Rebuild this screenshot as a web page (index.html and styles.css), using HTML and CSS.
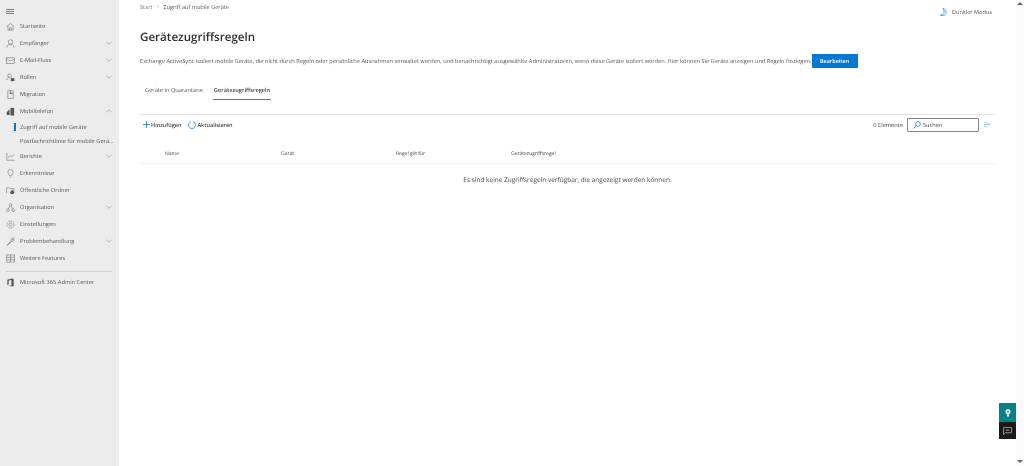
FILE: index.html
```html
<!DOCTYPE html>
<html lang="de">
<head>
<meta charset="utf-8">
<title>Gerätezugriffsregeln</title>
<link rel="stylesheet" href="styles.css">
</head>
<body>
<div class="app">
  <nav class="side">
    <div class="burger"><svg width="8" height="5" viewBox="0 0 8 5"><path d="M0 .5h8M0 2.500h8M0 4.500h8" stroke="#666" stroke-width=".8"/></svg></div>
    <a class="item"><svg class="ic" viewBox="0 0 10 10"><path d="M1 5 5 1.500 9 5M2.200 4.200V9h5.600V4.200M4 9V6.500h2V9"/></svg><span class="lb">Startseite</span></a>
    <a class="item"><svg class="ic" viewBox="0 0 10 10"><circle cx="5" cy="3.300" r="2.500"/><path d="M1 9.500C1 7 3 5.800 5 5.800S9 7 9 9.500"/></svg><span class="lb">Empfänger</span><svg class="chev" viewBox="0 0 7 4"><path d="M.5.5 3.500 3.500 6.500.5"/></svg></a>
    <a class="item"><svg class="ic" viewBox="0 0 10 10"><rect x=".5" y="2" width="9" height="6.500"/><path d="M.5 3.500 5 5.500 9.500 3.500"/></svg><span class="lb">E-Mail-Fluss</span><svg class="chev" viewBox="0 0 7 4"><path d="M.5.5 3.500 3.500 6.500.5"/></svg></a>
    <a class="item"><svg class="ic" viewBox="0 0 10 10"><circle cx="4" cy="3" r="2"/><path d="M.8 8C.8 6 2.200 5.200 4 5.200"/><rect class="fill" x="5.300" y="5.800" width="4" height="3.200"/></svg><span class="lb">Rollen</span><svg class="chev" viewBox="0 0 7 4"><path d="M.5.5 3.500 3.500 6.500.5"/></svg></a>
    <a class="item"><svg class="ic" viewBox="0 0 10 10"><path d="M2 .8h6v8.700H2zM5 .8v3h3"/><rect class="fill" x="4.200" y="3" width="2" height="1.500"/></svg><span class="lb">Migration</span></a>
    <a class="item"><svg class="ic" viewBox="0 0 10 10"><rect class="fill" x="5" y="1" width="4" height="8.500"/><path class="fill" d="M.8 5.500 4 2.800v6H.8z"/></svg><span class="lb">Mobiltelefon</span><svg class="chev" viewBox="0 0 7 4"><path d="M.5 3.500 3.500.5 6.500 3.500"/></svg></a>
    <a class="sub current"><span>Zugriff auf mobile Geräte</span></a>
    <a class="sub"><span>Postfachrichtlinie für mobile Gerä...</span></a>
    <a class="item"><svg class="ic" viewBox="0 0 10 10"><path d="M.8 1v8.200H9.500M2.500 6.500 4.500 4l2 1.500L9 2.500"/></svg><span class="lb">Berichte</span><svg class="chev" viewBox="0 0 7 4"><path d="M.5.5 3.500 3.500 6.500.5"/></svg></a>
    <a class="item"><svg class="ic" viewBox="0 0 10 10"><path d="M3.500 7C3.500 5.800 2 5.200 2 3.500a3 3 0 0 1 6 0C8 5.200 6.500 5.800 6.500 7zM4 9h2"/></svg><span class="lb">Erkenntnisse</span></a>
    <a class="item"><svg class="ic" viewBox="0 0 10 10"><path d="M.5 8V2h3l1 1H9v2"/><circle class="fill" cx="7" cy="7" r="2.200"/></svg><span class="lb">Öffentliche Ordner</span></a>
    <a class="item"><svg class="ic" viewBox="0 0 10 10"><circle cx="5" cy="2.200" r="1.500"/><circle cx="2" cy="8" r="1.500"/><circle cx="8" cy="8" r="1.500"/><path d="M4.300 3.500 2.700 6.700M5.700 3.500 7.300 6.700"/></svg><span class="lb">Organisation</span><svg class="chev" viewBox="0 0 7 4"><path d="M.5.5 3.500 3.500 6.500.5"/></svg></a>
    <a class="item"><svg class="ic" viewBox="0 0 10 10"><circle cx="5" cy="5" r="1.800"/><circle cx="5" cy="5" r="4" stroke-dasharray="1.500 .6"/></svg><span class="lb">Einstellungen</span></a>
    <a class="item"><svg class="ic" viewBox="0 0 10 10"><path d="M1 9 5.500 4.500C5 3 6 1 8.500 1L7 2.800 7.500 3.500 9.200 2.500C9 4.800 7.200 5.500 6 5L1.800 9.500z"/></svg><span class="lb">Problembehandlung</span><svg class="chev" viewBox="0 0 7 4"><path d="M.5.5 3.500 3.500 6.500.5"/></svg></a>
    <a class="item"><svg class="ic" viewBox="0 0 10 10"><path d="M.5 1h9v8h-9zM5 1v8M.5 3.700H9.500M.5 6.300H9.500"/></svg><span class="lb">Weitere Features</span></a>
    <div class="rule"></div>
    <a class="item"><svg class="ic" viewBox="0 0 10 10"><path class="fill" d="M1.500 2 6.500.5 8.500 1.200V8.800L6.500 9.500 1.500 8 6 8.500V2L3 3V7L1.500 8z"/></svg><span class="lb">Microsoft 365 Admin Center</span></a>
  </nav>

  <main class="main">
    <header class="top">
      <div class="crumbs"><span class="crumb-a">Start</span><span class="crumb-sep">&gt;</span><span>Zugriff auf mobile Geräte</span></div>
      <div class="dark"><svg class="moon" viewBox="0 0 10 10"><path d="M4.500.8C7 1.500 8.500 4 7.800 6.500 7.200 8.500 4.500 9.800 1.500 8.500 4 8.300 5.500 7 5.700 5.200 5.800 3.500 5.300 2 4.500.8z"/></svg><span>Dunkler Modus</span></div>
    </header>
    <h1>Gerätezugriffsregeln</h1>
    <div class="desc">
      <span>Exchange ActiveSync isoliert mobile Geräte, die nicht durch Regeln oder persönliche Ausnahmen verwaltet werden, und benachrichtigt ausgewählte Administratoren, wenn diese Geräte isoliert werden. Hier können Sie Geräte anzeigen und Regeln festlegen.</span>
      <button class="btn">Bearbeiten</button>
    </div>
    <div class="tabs">
      <div class="tab">Geräte in Quarantäne</div>
      <div class="tab on">Gerätezugriffsregeln</div>
    </div>
    <div class="toolbar">
      <div class="cmd"><svg width="7" height="7" viewBox="0 0 9 9"><path d="M4.500 0V9M0 4.500H9" stroke="#0078d4" stroke-width="1"/></svg><span>Hinzufügen</span></div>
      <div class="cmd"><svg width="8" height="8" viewBox="0 0 9 9" fill="none"><path d="M3 .9A3.900 3.900 0 1 0 6 .9" stroke="#0078d4" stroke-width=".8"/></svg><span>Aktualisieren</span></div>
      <div class="count">0 Elemente</div>
      <div class="search"><svg width="8" height="8" viewBox="0 0 8 8" fill="none"><circle cx="5" cy="3" r="2.400" stroke="#0078d4" stroke-width=".7"/><path d="M3.300 4.700.5 7.500" stroke="#0078d4" stroke-width=".8"/></svg><span>Suchen</span></div>
      <svg class="filter" width="7" height="5" viewBox="0 0 8 5"><path d="M0 .5H5M0 2.500H8M0 4.500H4" stroke="#8fc0ea" stroke-width=".9"/></svg>
    </div>
    <div class="thead">
      <div>Name</div><div>Gerät</div><div>Regel gilt für</div><div>Gerätezugriffsregel</div>
    </div>
    <p class="empty">Es sind keine Zugriffsregeln verfügbar, die angezeigt werden können.</p>
  </main>

  <div class="scroll"><i class="up"></i><i class="down"></i></div>
  <div class="float">
    <div class="fb teal"><svg width="6" height="8" viewBox="0 0 7 9"><path d="M3.500 0a3 3 0 0 1 3 3C6.500 4.800 4.500 5 4.500 8.500L3.500 9 2.500 8.500C2.500 5 .5 4.800.5 3a3 3 0 0 1 3-3z" fill="#fff"/><circle cx="3.500" cy="3" r="1" fill="#038387"/></svg></div>
    <div class="fb black"><svg width="9" height="8" viewBox="0 0 10 9" fill="none"><path d="M.5.500h9v6H2.500L.5 8.500z" stroke="#bbb" stroke-width=".8"/><path d="M3 3.500H7" stroke="#ddd" stroke-width=".8"/></svg></div>
  </div>
</div>
</body>
</html>
```
FILE: styles.css
```css
* { box-sizing: border-box; }
html, body { margin: 0; height: 100%; background: #fff; overflow: hidden; }
body { font-family: "Open Sans", "Liberation Sans", sans-serif; font-size: 5.700px; color: #323130; text-rendering: geometricPrecision; }
.app { display: flex; height: 466px; position: relative; filter: blur(.3px); will-change: transform; }

.side { width: 119px; flex: none; background: #ececec; display: flex; flex-direction: column; padding-top: 5px; }
.burger { height: 12.500px; padding: 0 0 0 6px; display: flex; align-items: center; }
.item { height: 17px; display: flex; align-items: center; padding: 0 7px 0 6px; color: #555; }
.ic { width: 9px; height: 9px; flex: none; fill: none; stroke: #777; stroke-width: .7; margin-right: 5px; }
.ic .fill, .ic path.fill, .ic rect.fill, .ic circle.fill { fill: #555; stroke: none; }
.lb { flex: 1; white-space: nowrap; }
.chev { width: 6px; height: 4px; flex: none; fill: none; stroke: #888; stroke-width: .7; }
.sub { height: 14px; display: flex; align-items: center; padding-left: 20px; position: relative; color: #555; white-space: nowrap; }
.current::before { content: ""; position: absolute; left: 14px; top: 3px; width: 2px; height: 8px; background: #0078d4; }
.rule { height: 1px; background: #d2d2d2; margin: 4px 7px 2px 6px; }

.main { flex: 1; min-width: 0; padding: 0 29px 0 21px; display: flex; flex-direction: column; }
.top { height: 14px; display: flex; justify-content: space-between; align-items: flex-end; }
.crumbs { display: flex; align-items: center; gap: 4px; font-size: 5.600px; color: #555; line-height: 14px; }
.crumb-a { color: #777; }
.crumb-sep { color: #999; font-size: 5px; }
.dark { display: flex; align-items: center; gap: 4px; color: #555; font-size: 5.600px; position: relative; top: 3px; right: 3px; }
.moon { width: 9px; height: 10px; fill: none; stroke: #0078d4; stroke-width: .7; }
h1 { margin: 15px 0 0; font-size: 11.600px; line-height: 17px; font-weight: 600; color: #323130; }
.desc { margin-top: 8px; display: flex; align-items: center; height: 14px; color: #555; white-space: nowrap; font-size: 5.650px; }
.btn { width: 46px; height: 14px; margin-left: 0; flex: none; border: 0; border-radius: 1px; background: #0078d4; color: #fff; font: 600 5.500px "Open Sans", sans-serif; padding: 0; text-rendering: geometricPrecision; }
.tabs { margin-top: 14px; display: flex; gap: 9px; height: 18px; padding-left: 4px; }
.tab { height: 18px; line-height: 16px; color: #555; padding: 0 1px; white-space: nowrap; }
.tab.on { color: #444; font-weight: 600; border-bottom: 1px solid #1a86d9; }
.toolbar { margin-top: 14px; height: 20px; border-top: 1px solid #e4e4e4; display: flex; align-items: center; gap: 7px; padding-left: 3px; color: #444; }
.cmd { display: flex; align-items: center; gap: 1px; font-weight: 600; font-size: 5.500px; }
.count { margin-left: auto; margin-right: -3px; }
.search { width: 72px; height: 14px; border: 1px solid #888; border-radius: 1px; display: flex; align-items: center; gap: 2px; padding-left: 5px; }
.filter { margin: 0 4px 0 -2px; }
.thead { margin-top: 11px; height: 19px; display: grid; grid-template-columns: 116px 115px 115px 1fr; padding-left: 25px; align-items: center; border-bottom: 1px solid #efefef; font-size: 5px; color: #444; }
.empty { margin: 10px 0 0; text-align: center; font-size: 6.500px; line-height: 12px; color: #444; }

.scroll { position: absolute; top: 0; right: 0; width: 8px; height: 466px; background: #fafafa; }
.up, .down { position: absolute; left: 1px; width: 0; height: 0; border-left: 3px solid transparent; border-right: 3px solid transparent; }
.up { top: 2px; border-bottom: 3px solid #666; }
.down { bottom: 3px; border-top: 3px solid #666; }
.float { position: absolute; right: 8px; top: 403px; width: 17px; }
.fb { display: flex; align-items: center; justify-content: center; }
.teal { background: #038387; height: 19px; }
.black { background: #1b1a19; height: 17px; }
```
